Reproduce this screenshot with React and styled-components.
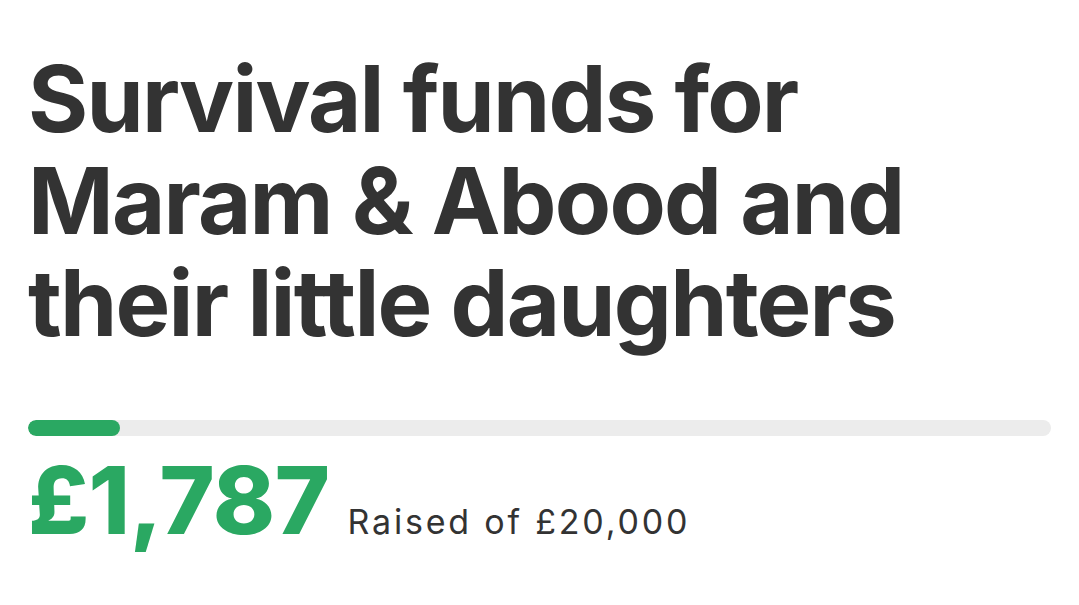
import React from "react"
import styled, { createGlobalStyle } from "styled-components"

const colors = {
  text: "#333333",
  green: "#2aa862",
  track: "#ececec",
}

const GlobalStyle = createGlobalStyle`
  html, body {
    margin: 0;
    background: #ffffff;
  }
  body {
    font-family: Inter, "Noto Sans", sans-serif;
    color: ${colors.text};
  }
`

const Page = styled.main`
  padding: 48px 28px 0;
`

const Title = styled.h1`
  margin: 0;
  font-size: 92px;
  line-height: 102px;
  font-weight: 700;
  letter-spacing: -1.8px;
  color: ${colors.text};
  max-width: 900px;
`

const Track = styled.div`
  margin-top: 66px;
  height: 16px;
  border-radius: 8px;
  background: ${colors.track};
  overflow: hidden;
`

const Fill = styled.div`
  height: 100%;
  border-radius: 8px;
  background: ${colors.green};
`

const Totals = styled.div`
  display: flex;
  align-items: baseline;
  gap: 18px;
  margin-top: 13px;
`

const Raised = styled.span`
  font-size: 94px;
  line-height: 103px;
  font-weight: 800;
  letter-spacing: -0.5px;
  color: ${colors.green};
`

const Target = styled.span`
  font-size: 34px;
  font-weight: 400;
  letter-spacing: 2.8px;
  color: ${colors.text};
`

const App = () => {
  const raised = 1787
  const target = 20000
  const percent = Math.max((raised / target) * 100, 9)

  return (
    <>
      <GlobalStyle />
      <Page>
        <Title>Survival funds for Maram &amp; Abood and their little daughters</Title>
        <Track>
          <Fill style={{ width: `${percent}%` }} />
        </Track>
        <Totals>
          <Raised>£1,787</Raised>
          <Target>Raised of £20,000</Target>
        </Totals>
      </Page>
    </>
  )
}

export default App
